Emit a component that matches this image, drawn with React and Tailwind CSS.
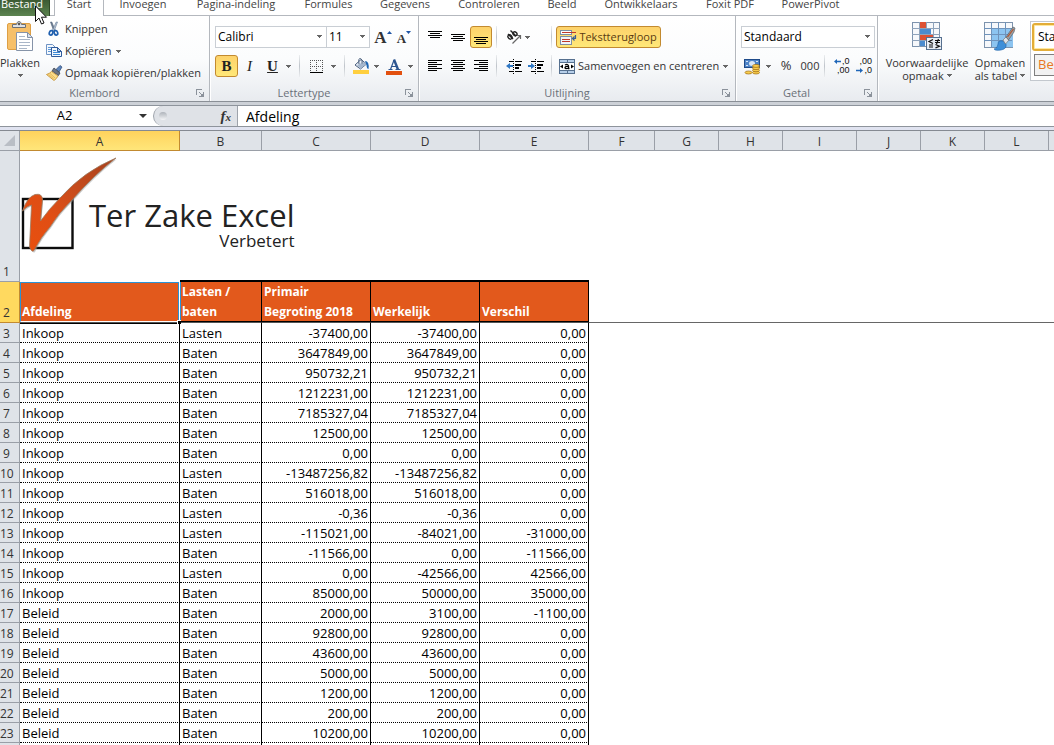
import React from 'react';

const COLUMNS = ['A', 'B', 'C', 'D', 'E', 'F', 'G', 'H', 'I', 'J', 'K', 'L'];

const ROWS = [
  [3, 'Inkoop', 'Lasten', '-37400,00', '-37400,00', '0,00'],
  [4, 'Inkoop', 'Baten', '3647849,00', '3647849,00', '0,00'],
  [5, 'Inkoop', 'Baten', '950732,21', '950732,21', '0,00'],
  [6, 'Inkoop', 'Baten', '1212231,00', '1212231,00', '0,00'],
  [7, 'Inkoop', 'Baten', '7185327,04', '7185327,04', '0,00'],
  [8, 'Inkoop', 'Baten', '12500,00', '12500,00', '0,00'],
  [9, 'Inkoop', 'Baten', '0,00', '0,00', '0,00'],
  [10, 'Inkoop', 'Lasten', '-13487256,82', '-13487256,82', '0,00'],
  [11, 'Inkoop', 'Baten', '516018,00', '516018,00', '0,00'],
  [12, 'Inkoop', 'Lasten', '-0,36', '-0,36', '0,00'],
  [13, 'Inkoop', 'Lasten', '-115021,00', '-84021,00', '-31000,00'],
  [14, 'Inkoop', 'Baten', '-11566,00', '0,00', '-11566,00'],
  [15, 'Inkoop', 'Lasten', '0,00', '-42566,00', '42566,00'],
  [16, 'Inkoop', 'Baten', '85000,00', '50000,00', '35000,00'],
  [17, 'Beleid', 'Baten', '2000,00', '3100,00', '-1100,00'],
  [18, 'Beleid', 'Baten', '92800,00', '92800,00', '0,00'],
  [19, 'Beleid', 'Baten', '43600,00', '43600,00', '0,00'],
  [20, 'Beleid', 'Baten', '5000,00', '5000,00', '0,00'],
  [21, 'Beleid', 'Baten', '1200,00', '1200,00', '0,00'],
  [22, 'Beleid', 'Baten', '200,00', '200,00', '0,00'],
  [23, 'Beleid', 'Baten', '10200,00', '10200,00', '0,00'],
  ['', '', '', '', '', ''],
];

function Caret({ className = '' }) {
  return (
    <svg width="5" height="3" viewBox="0 0 5 3" shapeRendering="crispEdges" className={'shrink-0 ' + className} aria-hidden="true">
      <path d="M0 0h5v1h-1v1h-1v1h-1v-1h-1v-1h-1z" fill="#666" />
    </svg>
  );
}

function Divider({ className = '' }) {
  return <div className={'h-[22px] w-px shrink-0 bg-linear-to-b from-[#eceef0] via-[#bfc4ca] to-[#eceef0] ' + className} />;
}

function Launcher() {
  return (
    <button aria-label="Meer opties" className="absolute right-[5px] bottom-[4px]">
      <svg width="8" height="8" viewBox="0 0 8 8" shapeRendering="crispEdges" fill="none" stroke="#8b929b">
        <path d="M0.5 6V0.5H6M3 3l3 3" />
        <path d="M7.500 3v4.500H3" />
        <path d="M5 6.500h2M6.500 5v2" />
      </svg>
    </button>
  );
}

function Group({ label, className, children }) {
  return (
    <section aria-label={label} className={'relative flex shrink-0 flex-col border-r border-[#b4b8be] shadow-[1px_0_0_#fff] ' + className}>
      <div className="h-[68px]">{children}</div>
      <div className="h-[17px] pr-[20px] text-center leading-[18px] text-[#6a7078]">{label}</div>
      <Launcher />
    </section>
  );
}

function Picker({ label, value, className }) {
  return (
    <div className={'relative h-[22px] ' + className}>
      <select aria-label={label} defaultValue={value} className="h-full w-full appearance-none border border-[#c9ced4] bg-white px-[2px] text-[12px] text-black outline-none">
        <option>{value}</option>
      </select>
      <Caret className="pointer-events-none absolute top-[9px] right-[5px]" />
    </div>
  );
}

function Tool({ label, active, className, children }) {
  const look = active ? 'rounded-[3px] border border-[#c28a30] bg-linear-to-b from-[#fdd26b] to-[#ffe878] ' : '';
  return (
    <button aria-label={label} title={label} className={'flex h-[22px] shrink-0 items-center justify-center ' + look + className}>
      {children}
    </button>
  );
}

function Lines({ rows }) {
  return (
    <svg width="14" height="12" viewBox="0 0 14 12" shapeRendering="crispEdges" aria-hidden="true">
      {rows.map(([x, y, w]) => (
        <rect key={y} x={x} y={y} width={w} height="1" fill="#000" />
      ))}
    </svg>
  );
}

function Indent({ out }) {
  return (
    <svg width="17" height="15" viewBox="0 0 17 15" shapeRendering="crispEdges" aria-hidden="true">
      <path d="M3 2h4M9 2h7M9 5h6M9 6h6M9 8h4M9 9h4M3 12h4M9 12h7" stroke="#000" transform="translate(0 .5)" />
      <path d="M7.500 0v15" stroke="#000" strokeDasharray="1 1" />
      <path d={out ? 'M0 7l4-3v2h3v2h-3v2z' : 'M7 7l-4-3v2h-3v2h3v2z'} fill="#2f78c4" shapeRendering="auto" />
    </svg>
  );
}

function PasteIcon() {
  return (
    <svg width="27" height="31" viewBox="0 0 27 31" aria-hidden="true">
      <rect x="0.500" y="2.500" width="23" height="26" rx="1.500" fill="#f6c06a" stroke="#dd9f45" />
      <path d="M5.500 6.500v-3h4q.5-3 2.500-3t2.500 3h4v3z" fill="#dfe2e6" stroke="#6b7076" />
      <circle cx="12" cy="3" r="1.200" fill="#555" />
      <path d="M9.500 11.500h11l5 5v13h-16z" fill="#fff" stroke="#8593a8" />
      <path d="M20.500 11.500v5h5z" fill="#dbe3ef" stroke="#8593a8" />
      <path d="M12 15.500h6M12 18.500h11M12 21.500h11M12 24.500h11M12 27.500h8" stroke="#a9b6c8" />
    </svg>
  );
}

function ScissorsIcon() {
  return (
    <svg width="16" height="16" viewBox="0 0 16 16" fill="none" aria-hidden="true">
      <path d="M4.500 1l1.300 0 3.500 8.500-1.500.8z" fill="#6f8198" stroke="#4d6076" strokeWidth=".6" />
      <path d="M11.500 1l-1.300 0-3.700 8.500 1.500.8z" fill="#c3cfdd" stroke="#5d7490" strokeWidth=".6" />
      <ellipse cx="5" cy="11.800" rx="1.700" ry="2.300" stroke="#1f5faf" strokeWidth="1.700" transform="rotate(20 5 12)" />
      <ellipse cx="10" cy="11.800" rx="1.700" ry="2.300" stroke="#1f5faf" strokeWidth="1.700" transform="rotate(-20 10 12)" />
    </svg>
  );
}

function CopyIcon() {
  return (
    <svg width="16" height="16" viewBox="0 0 16 16" aria-hidden="true">
      <path d="M.5 1.500h6l3 3v7h-9z" fill="#f3f8fd" stroke="#6f93c4" />
      <path d="M2 4.500h4M2 6.500h4M2 8.500h4" stroke="#5b96d8" />
      <path d="M5.500 4.500h6l4 4v5h-10z" fill="#f3f8fd" stroke="#2f5b9c" />
      <path d="M11.500 4.500v4h4z" fill="#b9d3ef" stroke="#2f5b9c" />
      <path d="M7 7.500h3M7 9.500h7M7 11.500h7" stroke="#3e8ad6" />
    </svg>
  );
}

function BrushIcon() {
  return (
    <svg width="17" height="16" viewBox="0 0 17 16" aria-hidden="true">
      <path d="M10 4.500l4-4 2 1.500-3 5z" fill="#5c84bb" stroke="#2b4876" strokeWidth=".7" />
      <path d="M8 3l6 5-1.500 2.500-6.500-4.500z" fill="#6c7482" stroke="#3d4552" strokeWidth=".8" />
      <path d="M5.500 6.500l6.500 4.500q-1.500 3-4 4.500l-7.500-6q3-.8 5-3z" fill="#fbdd8b" stroke="#c08c2c" strokeWidth=".8" />
      <path d="M4 8.500l5 4.500M2.500 9.500l5 4" stroke="#dba842" strokeWidth=".7" />
    </svg>
  );
}

function BordersIcon() {
  return (
    <svg width="13" height="13" viewBox="0 0 13 13" shapeRendering="crispEdges" aria-hidden="true">
      <path d="M0 .5h13M0 6.500h13M.5 0v12M6.500 0v12M12.500 0v12" stroke="#555" strokeDasharray="1 1" />
      <path d="M0 12.500h13" stroke="#000" />
    </svg>
  );
}

function FillIcon() {
  return (
    <svg width="17" height="16" viewBox="0 0 17 16" aria-hidden="true">
      <path d="M2 7l6-5.500 5.500 4.500-6 5z" fill="#e8eef6" stroke="#4b607e" />
      <path d="M4 7l7-3 2.500 2-6 5z" fill="#a5b7ce" />
      <path d="M6 6q-1-6 1.500-5.500t1.500 5" fill="none" stroke="#4b607e" />
      <path d="M12 3q4.500 0 3.500 8-1.800 0-2-4z" fill="#1e66b4" />
      <path d="M0 12h16v4h-16z" fill="#ffcf3f" />
    </svg>
  );
}

function FontColorIcon() {
  return (
    <svg width="16" height="17" viewBox="0 0 16 17" aria-hidden="true">
      <path d="M4.500 11.500L8 2" fill="none" stroke="#2d5590" strokeWidth="1.200" />
      <path d="M8 1.500l4 10" fill="none" stroke="#2d5590" strokeWidth="2.400" />
      <path d="M5.500 8.500h5M2.500 11.500h4M9.500 11.500h5" stroke="#2d5590" />
      <path d="M0 13h16v4h-16z" fill="#e2500f" />
    </svg>
  );
}

function OrientationIcon() {
  return (
    <svg width="16" height="14" viewBox="0 0 16 14" aria-hidden="true">
      <g fill="none" stroke="#222" strokeWidth="1.400">
        <ellipse cx="4" cy="7" rx="1.800" ry="2.300" transform="rotate(-45 4 7)" />
        <path d="M2 4l5 5" />
        <path d="M4.500 .5l5.500 5.500" />
        <ellipse cx="9" cy="3.800" rx="1.800" ry="2.200" transform="rotate(-45 9 3.800)" />
      </g>
      <path d="M6.500 13.500l8-8M11 5.500h3.500v3.500" fill="none" stroke="#666" strokeWidth="1.200" />
    </svg>
  );
}

function WrapIcon() {
  return (
    <svg width="17" height="15" viewBox="0 0 17 15" aria-hidden="true">
      <g shapeRendering="crispEdges">
        <rect x=".5" y=".5" width="11" height="4" fill="#fff" stroke="#7f8ea3" />
        <rect x=".5" y="6.500" width="11" height="8" fill="#f1f4f8" stroke="#7f8ea3" />
        <path d="M2 2.500h14M2 9.500h8M2 11.500h8" stroke="#c0392b" />
      </g>
      <path d="M15.500 5v3.500h-2.500M14.500 6.500l-2 2 2 2" fill="none" stroke="#3a5f96" strokeWidth="1.200" />
    </svg>
  );
}

function MergeIcon() {
  return (
    <svg width="16" height="15" viewBox="0 0 16 15" aria-hidden="true">
      <g shapeRendering="crispEdges">
        <rect x=".5" y=".5" width="15" height="14" fill="#b7cfe9" stroke="#56708f" />
        <path d="M1 3.500h14M1 11.500h14M8 1v3M8 11v3" stroke="#56708f" />
        <path d="M1 4h14v7h-14z" fill="#fff" />
      </g>
      <path d="M1 7.500l3-2v4zM15 7.500l-3-2v4z" fill="#000" />
      <path d="M6 6q3-1.500 3.500 1v2.500h1M9.500 7.500q-3.500-.3-3.500 1.200t3.500.3" fill="none" stroke="#000" strokeWidth="1.300" />
    </svg>
  );
}

function MoneyIcon() {
  return (
    <svg width="17" height="17" viewBox="0 0 17 17" aria-hidden="true">
      <rect x=".5" y="1.500" width="15" height="8" fill="#4e84c8" stroke="#1f4b8a" />
      <ellipse cx="8" cy="5.500" rx="3" ry="2.500" fill="#d7e5f6" />
      <path d="M2 3.500h2M12 3.500h2M2 7.500h2" stroke="#d7e5f6" />
      <g fill="#f9cd4e" stroke="#9b6a12" strokeWidth=".7">
        <ellipse cx="4.500" cy="14.500" rx="3.500" ry="1.500" />
        <ellipse cx="12" cy="14.500" rx="3.500" ry="1.500" />
        <ellipse cx="12" cy="12.300" rx="3.500" ry="1.500" />
        <ellipse cx="12" cy="10.100" rx="3.500" ry="1.500" />
        <ellipse cx="12" cy="7.900" rx="3.500" ry="1.500" />
      </g>
    </svg>
  );
}

function DecimalIcon({ more }) {
  return (
    <span className="relative flex h-[18px] w-4 flex-col items-end justify-between font-['Liberation_Sans',sans-serif] text-[9px] leading-[9px] text-[#111]">
      <span>{more ? ',0' : ',00'}</span>
      <span>{more ? ',00' : ',0'}</span>
      <svg width="7" height="5" viewBox="0 0 7 5" className={more ? 'absolute top-[2px] left-0' : 'absolute bottom-[2px] left-0'} aria-hidden="true">
        <path d={more ? 'M0 2.500l3-2.500v1.700h4v1.600h-4v1.700z' : 'M7 2.500l-3-2.500v1.700h-4v1.600h4v1.700z'} fill="#1f66b8" />
      </svg>
    </span>
  );
}

function CondFormatIcon() {
  return (
    <svg width="30" height="29" viewBox="0 0 30 29" shapeRendering="crispEdges" aria-hidden="true">
      <rect x=".5" y=".5" width="27" height="24" fill="#f6f8fb" stroke="#7d93ad" />
      <path d="M7.500 0v25M14.500 0v25M21.500 0v25M0 6.500h28M0 12.500h28M0 18.500h28" stroke="#8fa3bb" />
      <path d="M8 0h6v6h-6zM8 13h13v5h-13z" fill="#dd5133" />
      <path d="M8 7h11v5h-11zM8 19h5v5h-5z" fill="#4b8ccf" />
      <rect x="14.500" y="15.500" width="15" height="12" fill="#e9eff6" stroke="#56708f" />
      <g shapeRendering="auto" fill="none" stroke="#111" strokeWidth="1.200">
        <path d="M21 17.500l-4 2 4 2M17 23h4M17 25h4M23 18.500h5M23 20.500h5M26.500 17l-2 5M23.500 22.500l4 1.700-4 1.700" />
      </g>
    </svg>
  );
}

function TableFormatIcon() {
  return (
    <svg width="32" height="29" viewBox="0 0 32 29" aria-hidden="true">
      <g shapeRendering="crispEdges">
        <rect x=".5" y=".5" width="28" height="25" fill="#f6f8fb" stroke="#7d93ad" />
        <path d="M8 7h21v18h-21z" fill="#8cc4f0" />
        <path d="M7.500 0v25M14.500 0v25M21.500 0v25M0 6.500h28M0 12.500h28M0 18.500h28" stroke="#6f93bb" />
      </g>
      <path d="M10 27q4-1 4-5t5-3l3 3q1 5-5 6t-7-1z" fill="#3f8fd8" stroke="#1e63aa" strokeWidth=".6" />
      <path d="M19 18l3-3 3 3-3.500 4z" fill="#e0e4e9" stroke="#777" strokeWidth=".7" />
      <path d="M22 15l7-10 2 1-1 4-5.500 8z" fill="#9aa0a6" stroke="#5c6167" strokeWidth=".7" />
      <path d="M23.500 15l6-8" stroke="#b4552b" strokeWidth="1.200" />
    </svg>
  );
}

function CheckLogo() {
  return (
    <svg width="52" height="98" viewBox="0 0 52 98" className="shrink-0 overflow-visible" aria-hidden="true">
      <defs>
        <linearGradient id="tick" x1="0" y1="1" x2="1" y2="0">
          <stop offset="0" stopColor="#e8500f" />
          <stop offset=".35" stopColor="#e04e14" />
          <stop offset=".6" stopColor="#c84c1c" />
          <stop offset="1" stopColor="#a8401c" />
        </linearGradient>
      </defs>
      <rect x="1" y="42" width="49.500" height="49" fill="#fff" stroke="#0c0c0c" strokeWidth="2.400" />
      <path d="M2 55Q6 41 14 38.500Q21 37 21 44L19.500 64Q28 53 39 42Q63 15 95 2Q73 19 51 44Q37 58 29 71Q20 81 13 95Q11 97 9 91L11 49Q6 50 2 55z" fill="#999" opacity=".5" />
      <path d="M.5 54Q5 40 13 37.500Q20.500 36 20.500 43L18.500 64Q27 52 38 41Q62 14 94 1Q72 18 50 43Q36 57 28 70Q19 80 12 93.500Q10 96 7.500 90L9.500 48Q5 49 .5 54z" fill="url(#tick)" stroke="#9b7a5e" strokeWidth=".8" />
    </svg>
  );
}

function Tabs() {
  const tabs = [
    ['Invoegen', 'w-[76px]'],
    ['Pagina-indeling', 'w-[110px]'],
    ['Formules', 'w-[75px]'],
    ['Gegevens', 'w-[78px]'],
    ['Controleren', 'w-[90px]'],
    ['Beeld', 'w-[56px]'],
    ['Ontwikkelaars', 'w-[102px]'],
    ['Foxit PDF', 'w-[76px]'],
    ['PowerPivot', 'w-[85px]'],
  ];
  return (
    <nav className="relative flex h-[16px] shrink-0 items-stretch text-[11px] text-[#444]">
      <button className="flex w-[50px] items-start border-r border-[#2f4a28] bg-linear-to-b from-[#3c5a33] to-[#5c8450] pl-px leading-[8px] text-white">Bestand</button>
      <div className="w-1 border-b border-[#b4b8be]" />
      <button className="flex w-[50px] items-start justify-center border-x border-[#b4b8be] leading-[8px]">Start</button>
      <div className="flex flex-1 border-b border-[#b4b8be] pl-px">
        {tabs.map(([name, width]) => (
          <button key={name} className={'flex shrink-0 items-start justify-center whitespace-nowrap leading-[8px] ' + width}>
            {name}
          </button>
        ))}
      </div>
      <svg width="13" height="20" viewBox="0 0 13 20" className="absolute top-[5px] left-[35px] z-10" aria-hidden="true">
        <path d="M.5 1v15.500l3.500-3.500 2.500 6 2.500-1-2.500-5.800h5z" fill="#fff" stroke="#111" />
      </svg>
    </nav>
  );
}

function Ribbon() {
  return (
    <div className="flex h-[86px] shrink-0 overflow-hidden border-b border-[#8a8f96] bg-linear-to-b from-white via-[#fbfcfd] to-[#e8ebef] text-[11px] text-[#333]">
      <Group label="Klembord" className="w-[210px]">
        <div className="flex h-full">
          <button className="flex w-[40px] flex-col items-center pt-[5px]">
            <PasteIcon />
            <span className="mt-[3px] leading-4">Plakken</span>
            <Caret className="mt-[3px]" />
          </button>
          <div className="flex flex-col pt-[2px] pl-[6px] whitespace-nowrap">
            <button className="flex h-[22px] items-center gap-[3px]"><ScissorsIcon />Knippen</button>
            <button className="flex h-[22px] items-center gap-[3px]"><CopyIcon />Kopiëren<Caret className="ml-[2px]" /></button>
            <button className="flex h-[22px] items-center gap-[2px]"><BrushIcon />Opmaak kopiëren/plakken</button>
          </div>
        </div>
      </Group>

      <Group label="Lettertype" className="w-[209px]">
        <div className="flex flex-col gap-[7px] pt-[10px] pl-[5px]">
          <div className="flex items-center">
            <Picker label="Lettertype" value="Calibri" className="w-[112px]" />
            <Picker label="Tekengrootte" value="11" className="-ml-px w-[44px]" />
            <Tool label="Lettertype vergroten" className="ml-[3px] w-[20px]">
              <span className="font-['Liberation_Serif',serif] text-[17px] leading-none font-bold text-[#333]">A</span>
              <svg width="5" height="3" viewBox="0 0 5 3" className="-mt-[10px]"><path d="M0 3h5l-2.500-3z" fill="#1f55a5" /></svg>
            </Tool>
            <Tool label="Lettertype verkleinen" className="ml-px w-[20px]">
              <span className="mt-[3px] font-['Liberation_Serif',serif] text-[13px] leading-none font-bold text-[#333]">A</span>
              <svg width="5" height="3" viewBox="0 0 5 3" className="-mt-[10px]"><path d="M0 0h5l-2.500 3z" fill="#1f55a5" /></svg>
            </Tool>
          </div>
          <div className="flex items-center font-['Liberation_Serif',serif] text-[15px] text-[#222]">
            <Tool label="Vet" active className="w-[23px]"><b>B</b></Tool>
            <Tool label="Cursief" className="w-[23px]"><i>I</i></Tool>
            <Tool label="Onderstrepen" className="w-[23px]"><b className="underline">U</b></Tool>
            <Caret className="ml-[2px]" />
            <Divider className="ml-[8px]" />
            <Tool label="Randen" className="ml-[6px] w-[21px]"><BordersIcon /></Tool>
            <Caret className="ml-[4px]" />
            <Divider className="ml-[8px]" />
            <Tool label="Opvulkleur" className="ml-[6px] w-[21px]"><FillIcon /></Tool>
            <Caret className="ml-[2px]" />
            <Tool label="Tekstkleur" className="ml-[4px] w-[22px]"><FontColorIcon /></Tool>
            <Caret className="ml-[3px]" />
          </div>
        </div>
      </Group>

      <Group label="Uitlijning" className="w-[317px]">
        <div className="flex flex-col gap-[7px] pt-[10px] pl-[5px]">
          <div className="flex items-center">
            <Tool label="Boven uitlijnen" className="w-[22px] pb-[6px]"><Lines rows={[[0, 3, 14], [2, 5, 10], [0, 7, 14], [2, 9, 10]]} /></Tool>
            <Tool label="Centreren" className="w-[23px]"><Lines rows={[[0, 3, 14], [2, 5, 10], [0, 7, 14], [2, 9, 10]]} /></Tool>
            <Tool label="Onder uitlijnen" active className="ml-[1px] w-[22px] pt-[6px]"><Lines rows={[[0, 3, 14], [2, 5, 10], [0, 7, 14], [2, 9, 10]]} /></Tool>
            <Divider className="ml-[4px]" />
            <Tool label="Afdrukstand" className="ml-[5px] w-[23px]"><OrientationIcon /></Tool>
            <Caret />
            <Divider className="ml-[21px]" />
            <Tool active className="ml-[4px] w-[105px] gap-[2px] text-[#5a3a12]"><WrapIcon />Tekstterugloop</Tool>
          </div>
          <div className="flex items-center">
            <Tool label="Links uitlijnen" className="w-[22px]"><Lines rows={[[0, 0, 14], [0, 2, 9], [0, 4, 14], [0, 6, 9], [0, 8, 14], [0, 10, 9]]} /></Tool>
            <Tool label="Midden uitlijnen" className="w-[23px]"><Lines rows={[[0, 0, 14], [2, 2, 10], [0, 4, 14], [2, 6, 10], [0, 8, 14], [2, 10, 10]]} /></Tool>
            <Tool label="Rechts uitlijnen" className="ml-[1px] w-[22px]"><Lines rows={[[0, 0, 14], [5, 2, 9], [0, 4, 14], [5, 6, 9], [0, 8, 14], [5, 10, 9]]} /></Tool>
            <Divider className="ml-[4px]" />
            <Tool label="Inspringing verkleinen" className="ml-[6px] w-[22px]"><Indent out /></Tool>
            <Tool label="Inspringing vergroten" className="w-[22px]"><Indent /></Tool>
            <Divider className="ml-[4px]" />
            <button className="ml-[7px] flex h-[22px] items-center gap-[3px] whitespace-nowrap"><MergeIcon />Samenvoegen en centreren<Caret className="ml-px" /></button>
          </div>
        </div>
      </Group>

      <Group label="Getal" className="w-[142px]">
        <div className="flex flex-col gap-[7px] pt-[10px] pl-[5px]">
          <Picker label="Getalnotatie" value="Standaard" className="w-[134px]" />
          <div className="flex items-center">
            <Tool label="Financiële getalnotatie" className="w-[22px]"><MoneyIcon /></Tool>
            <Caret className="ml-[3px]" />
            <Tool label="Procentnotatie" className="ml-[4px] w-[22px] text-[13px]">%</Tool>
            <Tool label="Duizendtallen" className="ml-px w-[24px]">000</Tool>
            <Divider className="ml-[2px]" />
            <Tool label="Meer decimalen" className="ml-[5px] w-[23px]"><DecimalIcon more /></Tool>
            <Tool label="Minder decimalen" className="w-[22px]"><DecimalIcon /></Tool>
          </div>
        </div>
      </Group>

      <div className="flex min-w-0 flex-1 overflow-hidden">
        <button className="ml-[5px] flex w-[88px] shrink-0 flex-col items-center pt-[6px] leading-[13px]">
          <CondFormatIcon />
          <span className="mt-[5px]">Voorwaardelijke</span>
          <span className="flex items-center gap-[3px]">opmaak<Caret /></span>
        </button>
        <button className="ml-[3px] flex w-[52px] shrink-0 flex-col items-center pt-[6px] leading-[13px]">
          <TableFormatIcon />
          <span className="mt-[5px]">Opmaken</span>
          <span className="flex items-center gap-[3px] whitespace-nowrap">als tabel<Caret /></span>
        </button>
        <div className="mt-[5px] ml-[4px] flex h-[60px] min-w-[120px] flex-1 flex-col gap-[3px] border border-[#c3c8ce] bg-white pt-px pl-px text-[12px]">
          <button className="flex h-[28px] items-center rounded-[3px] border-2 border-[#e3ad38] pl-[4px] text-black shadow-[inset_0_0_0_1px_#ffe9a0]">Standaard</button>
          <button className="ml-[2px] flex h-[22px] items-center border border-[#7f7f7f] bg-[#f2f2f2] pl-[3px] text-[13px] text-[#e87722]">Berekening</button>
        </div>
      </div>
    </div>
  );
}

function FormulaBar() {
  return (
    <div className="shrink-0 border-b border-[#858a92] bg-[#e0e3f0] pb-[3px]">
      <div className="h-[3px] bg-[#cdd1d7]" />
      <div className="flex h-[22px] border-y border-[#8e949c] bg-white text-[13px] text-black">
        <div className="flex w-[153px] shrink-0 items-center">
          <input aria-label="Naamvak" defaultValue="A2" className="w-[129px] bg-transparent text-center outline-none" />
          <button aria-label="Namen" className="ml-[10px]">
            <svg width="8" height="4" viewBox="0 0 8 4"><path d="M0 0h8l-4 4z" fill="#333" /></svg>
          </button>
        </div>
        <div className="flex w-[85px] shrink-0 items-center justify-between rounded-l-full border-r border-l border-[#9ea3ab] bg-[#dfe2e7] pr-[6px] pl-[5px]">
          <span className="h-[8px] w-[8px] rounded-full bg-linear-to-b from-[#aeb3ba] to-[#f4f5f7]" />
          <button aria-label="Functie invoegen" className="font-['Liberation_Serif',serif] text-[15px] leading-none font-bold text-[#333] italic">
            f<span className="text-[11px]">x</span>
          </button>
        </div>
        <input aria-label="Formulebalk" defaultValue="Afdeling" className="min-w-0 flex-1 bg-transparent pt-px pl-[8px] text-[14px] outline-none" />
      </div>
    </div>
  );
}

function Sheet() {
  const head = 'border-r border-b border-[#9a9fa7] font-normal ';
  const orange = 'border-r border-r-black border-b border-b-[#555] bg-[#e2591c] shadow-[0_-2px_0_#000,inset_0_-1px_0_#000] px-[2px] py-0 text-left align-bottom text-[12px] leading-[20px] font-bold text-white ';
  const cell = 'border-b border-black [border-bottom-style:dotted] border-r [border-right-style:solid] px-[2px] pt-[2px] pb-0 leading-[17px] ';
  return (
    <table className="w-full min-w-[1048px] table-fixed border-separate border-spacing-0 text-[13px] leading-[19px] text-black">
      <colgroup>
        <col className="w-[20px]" />
        <col className="w-[160px]" />
        <col className="w-[82px]" />
        <col className="w-[109px]" />
        <col className="w-[109px]" />
        <col className="w-[109px]" />
        <col className="w-[66px]" />
        <col className="w-[64px]" />
        <col className="w-[64px]" />
        <col className="w-[74px]" />
        <col className="w-[64px]" />
        <col className="w-[64px]" />
        <col className="w-[64px]" />
        <col />
      </colgroup>
      <thead>
        <tr className="h-[20px] text-[12px] text-[#333]">
          <td className={head + 'bg-[#dfe3e8] p-0'}>
            <svg width="11" height="11" viewBox="0 0 11 11" className="ml-[4px]" aria-hidden="true"><path d="M11 0v11h-11z" fill="#b9bec5" /></svg>
          </td>
          {COLUMNS.map((name) => (
            <th key={name} scope="col" className={'border-r border-b px-0 pt-[2px] pb-0 leading-[17px] font-normal ' + (name === 'A' ? 'border-[#c28a30] bg-linear-to-b from-[#ffd35c] to-[#ffe67a]' : 'border-[#9a9fa7] bg-[#dfe3e8]')}>
              {name}
            </th>
          ))}
          <td className="border-b border-[#9a9fa7] bg-[#dfe3e8] p-0" />
        </tr>
      </thead>
      <tbody>
        <tr className="h-[131px]">
          <th scope="row" className={head + 'bg-[#dfe3e8] p-0 pr-[6px] align-bottom text-[12px] text-[#333]'}>1</th>
          <td colSpan={13} className="p-0 align-top">
            <div className="flex pt-[6px] pl-[2px]">
              <CheckLogo />
              <div className="ml-[15px] flex flex-col items-end pt-[42px] text-[#222]">
                <span className="text-[31px] leading-[32px]">Ter Zake Excel</span>
                <span className="text-[17px] leading-[20px]">Verbetert</span>
              </div>
            </div>
          </td>
        </tr>
        <tr className="h-[41px]">
          <th scope="row" className="border-r border-b border-[#c28a30] bg-[#ffd95f] p-0 pr-[6px] align-bottom text-[12px] font-normal text-[#333]">2</th>
          <th scope="col" className="relative border-b border-[#555] bg-[#e2591c] px-[2px] py-0 text-left align-bottom text-[12px] leading-[20px] font-bold text-white">
            Afdeling
            <span className="absolute inset-y-0 right-px left-0 border border-[#2a93d5] border-b-white shadow-[1px_0_0_#fff,2px_0_0_#2a93d5,0_1px_0_#555,0_2px_0_#000]" />
            <span className="absolute -right-px -bottom-[2px] h-[4px] w-[4px] border-t border-l border-white bg-black" />
          </th>
          <th scope="col" className={orange}>Lasten / baten</th>
          <th scope="col" className={orange}>Primair Begroting 2018</th>
          <th scope="col" className={orange}>Werkelijk</th>
          <th scope="col" className={orange}>Verschil</th>
          <td colSpan={8} className="border-b border-[#666] p-0" />
        </tr>
        {ROWS.map(([n, dept, kind, ...amounts], i) => (
          <tr key={i} className="h-[20px]">
            <th scope="row" className={head + 'bg-[#dfe3e8] pt-[2px] pr-[6px] pb-0 pl-0 leading-[17px] text-[12px] text-[#333]'}>{n}</th>
            <td className={cell}>{dept}</td>
            <td className={cell}>{kind}</td>
            {amounts.map((amount, j) => (
              <td key={j} className={cell + 'text-right'}>{amount}</td>
            ))}
            <td colSpan={8} className="p-0" />
          </tr>
        ))}
      </tbody>
    </table>
  );
}

export default function App() {
  return (
    <main className="flex h-screen flex-col overflow-hidden bg-white font-['Open_Sans','Noto_Sans',sans-serif]">
      <Tabs />
      <Ribbon />
      <FormulaBar />
      <div className="min-h-0 flex-1 overflow-hidden">
        <Sheet />
      </div>
    </main>
  );
}
